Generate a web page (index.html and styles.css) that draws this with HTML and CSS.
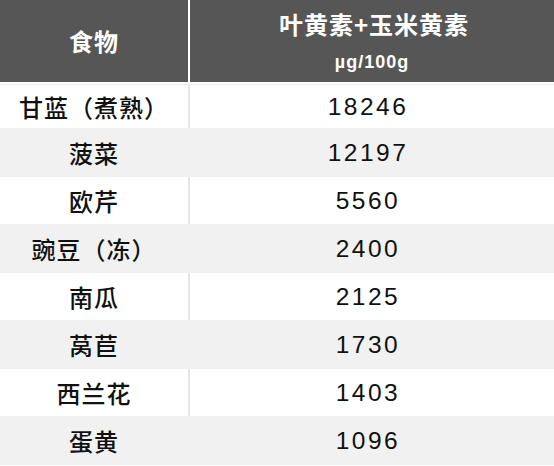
FILE: index.html
```html
<!DOCTYPE html>
<html lang="zh-CN">
<head>
<meta charset="utf-8">
<title>叶黄素+玉米黄素</title>
<link rel="stylesheet" href="styles.css">
</head>
<body>
<table class="lutein">
  <colgroup>
    <col class="col-food">
    <col class="col-value">
  </colgroup>
  <thead>
    <tr class="head-row">
      <th class="food">食物</th>
      <th class="value">
        <div class="title">叶黄素+玉米黄素</div>
        <div class="unit">µg/100g</div>
      </th>
    </tr>
  </thead>
  <tbody>
    <tr class="row odd first"><td class="food">甘蓝（煮熟）</td><td class="value">18246</td></tr>
    <tr class="row even"><td class="food">菠菜</td><td class="value">12197</td></tr>
    <tr class="row odd"><td class="food">欧芹</td><td class="value">5560</td></tr>
    <tr class="row even"><td class="food">豌豆（冻）</td><td class="value">2400</td></tr>
    <tr class="row odd"><td class="food">南瓜</td><td class="value">2125</td></tr>
    <tr class="row even"><td class="food">莴苣</td><td class="value">1730</td></tr>
    <tr class="row odd"><td class="food">西兰花</td><td class="value">1403</td></tr>
    <tr class="row even"><td class="food">蛋黄</td><td class="value">1096</td></tr>
  </tbody>
</table>
</body>
</html>
```
FILE: styles.css
```css
html, body {
  margin: 0;
  padding: 0;
  background: #ffffff;
}

body {
  font-family: "Liberation Sans", "Noto Sans CJK SC", sans-serif;
  color: #111111;
}

.lutein {
  width: 554px;
  border-collapse: separate;
  border-spacing: 0;
  table-layout: fixed;
}

.col-food { width: 190px; }
.col-value { width: 364px; }

.lutein th,
.lutein td {
  box-sizing: border-box;
  padding: 0;
  text-align: center;
  vertical-align: middle;
}

.head-row th {
  height: 84px;
  background: #565656;
  color: #ffffff;
  font-family: "Noto Sans CJK SC", sans-serif;
  font-weight: 700;
  border-bottom: 2px solid #ffffff;
}

.head-row th.food {
  border-right: 2px solid #ffffff;
  font-size: 24px;
  letter-spacing: 1px;
  padding-bottom: 2px;
}

.head-row .title {
  font-size: 24px;
  line-height: 30px;
  letter-spacing: 1px;
  padding-left: 4px;
}

.head-row .unit {
  font-family: "Liberation Sans", sans-serif;
  font-size: 18px;
  line-height: 22px;
  letter-spacing: 1px;
  margin-top: 12px;
}

.row td {
  height: 48px;
  font-size: 24px;
}

.row.first td {
  height: 44px;
  border-top: 1px solid #eeeeee;
}

.row.odd td { background: #ffffff; }
.row.even td { background: #f1f1f1; height: 49px; }
.row.odd:not(.first) td { height: 47px; }

.row td.food {
  font-family: "Noto Sans CJK SC", sans-serif;
  font-weight: 500;
  border-right: 2px solid #e6e6e6;
  letter-spacing: 1px;
}

.row.even td.food {
  border-right-color: #f1f1f1;
}

.row td.value {
  font-family: "Liberation Sans", sans-serif;
  font-size: 24.5px;
  letter-spacing: 2.5px;
  padding-right: 8px;
}
```
